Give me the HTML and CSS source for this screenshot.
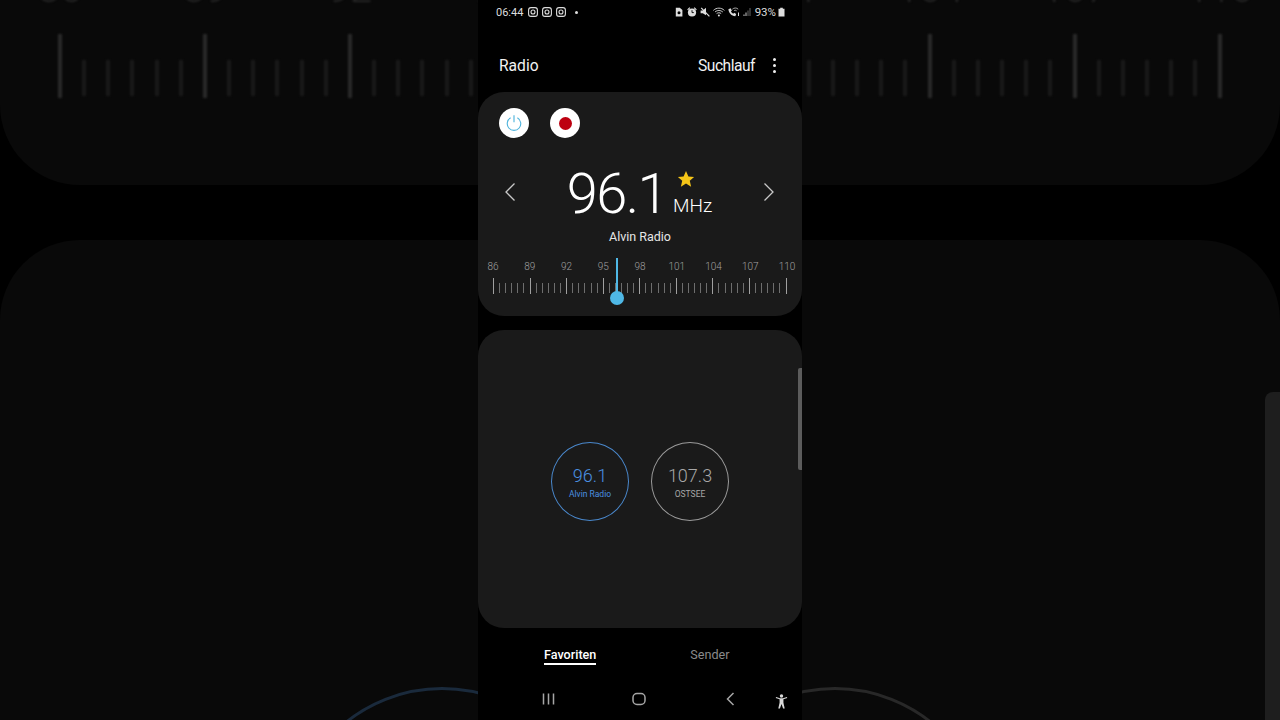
FILE: index.html
```html
<!DOCTYPE html>
<html lang="en">
<head>
    <meta charset="UTF-8">
    <meta name="viewport" content="width=device-width, initial-scale=1.0">
    <title>Radio</title>
    <link rel="stylesheet" href="styles.css">
</head>
<body>

    <!-- enlarged, dimmed copy of the screen behind the phone -->
    <div class="backdrop">
        <div class="bg-card bg-top">
            <div class="bg-labels">
                <span>86</span><span>89</span><span>92</span><span>95</span><span>98</span><span>101</span><span>104</span><span>107</span><span>110</span>
            </div>
            <div class="bg-ticks">
                <i class="big"></i><i></i><i></i><i></i><i></i><i></i>
                <i class="big"></i><i></i><i></i><i></i><i></i><i></i>
                <i class="big"></i><i></i><i></i><i></i><i></i><i></i>
                <i class="big"></i><i></i><i></i><i></i><i></i><i></i>
                <i class="big"></i><i></i><i></i><i></i><i></i><i></i>
                <i class="big"></i><i></i><i></i><i></i><i></i><i></i>
                <i class="big"></i><i></i><i></i><i></i><i></i><i></i>
                <i class="big"></i><i></i><i></i><i></i><i></i><i></i>
                <i class="big"></i>
            </div>
        </div>
        <div class="bg-card bg-bottom">
            <div class="bg-ring bg-ring-blue"></div>
            <div class="bg-ring bg-ring-grey"></div>
            <div class="bg-thumb"></div>
        </div>
    </div>

    <div class="phone">
        <div class="status-bar">
            <span class="time">06:44</span>
            <svg class="ig" viewBox="0 0 10 10"><rect x="0.6" y="0.6" width="8.8" height="8.8" rx="2.4"/><circle cx="5" cy="5" r="2"/></svg>
            <svg class="ig" viewBox="0 0 10 10"><rect x="0.6" y="0.6" width="8.8" height="8.8" rx="2.4"/><circle cx="5" cy="5" r="2"/></svg>
            <svg class="ig" viewBox="0 0 10 10"><rect x="0.6" y="0.6" width="8.8" height="8.8" rx="2.4"/><circle cx="5" cy="5" r="2"/></svg>
            <span class="dot"></span>
            <div class="status-right">
                <svg class="st" viewBox="0 0 10 10"><path class="fill" d="M1.8 0.8h4L8.4 3V9.6H1.8z"/><circle cx="5" cy="5.8" r="1.5" fill="#000"/></svg>
                <svg class="st" viewBox="0 0 10 10"><circle class="fill" cx="5" cy="5.5" r="4.1"/><path class="fill" d="M0.2 2.4L2.4 0.2 3.2 1 1 3.2zM9.8 2.4L7.6 0.2 6.8 1 9 3.2z"/><path d="M5 3.2V5.6H6.8" fill="none" stroke="#000" stroke-width="0.9"/></svg>
                <svg class="st" viewBox="0 0 10 10"><path class="fill" d="M0.6 3.4h2.2L6 0.8V8.2L2.8 6.2H0.6z"/><path d="M1.2 0.8L9.4 9.4" fill="none" stroke="#ddd" stroke-width="1.2"/></svg>
                <svg class="st wide" viewBox="0 0 12 10"><path d="M0.4 3.4C3.4 0.4 8.4 0.4 11.4 3.4M2 5C4.2 3 7.6 3 9.8 5M3.6 6.6C5 5.5 6.8 5.5 8.2 6.6" fill="none" stroke="#ccc" stroke-width="1"/><circle class="fill" cx="5.9" cy="8.4" r="1"/></svg>
                <svg class="st wide" viewBox="0 0 12 10"><path class="fill" d="M0.4 2.2L2.6 1.2 3.9 3.4 2.9 4.4C3.4 5.4 4.2 6.2 5.2 6.7L6.2 5.7 8.2 7 7.3 9.2C3.6 9 0.6 5.8 0.4 2.2z"/><path d="M4.4 2.2C6 0.6 8.6 0.6 10.2 2.2M6 3.8C6.8 3.1 7.8 3.1 8.6 3.8" fill="none" stroke="#bbb" stroke-width="0.9"/><path class="fill" d="M10 5.6h1V9h-1z"/></svg>
                <svg class="st signal" viewBox="0 0 8 10"><path d="M0.5 7.5h1v1.5h-1zM2.5 5.5h1v3.5h-1z" fill="#ccc"/><path d="M4.5 3.5h1v5.5h-1zM6.5 1h1v8h-1z" fill="#666"/></svg>
                <span class="pct">93%</span>
                <svg class="batt" viewBox="0 0 7 10"><path class="fill" d="M2.2 0.8h2.6v1H6.5V9.5H0.5V1.8h1.7z"/></svg>
            </div>
        </div>

        <div class="app-bar">
            <span class="app-title">Radio</span>
            <span class="scan">Suchlauf</span>
            <span class="more"><i></i><i></i><i></i></span>
        </div>

        <div class="card tuner">
            <div class="round-btns">
                <div class="round-btn">
                    <svg viewBox="0 0 16 16" width="18" height="18"><path d="M5 3.4A6 6 0 1 0 11 3.4M8 1.2V7.4" fill="none" stroke="#4fb4dc" stroke-width="1"/></svg>
                </div>
                <div class="round-btn"><span class="rec"></span></div>
            </div>

            <div class="freq-row">
                <svg class="arrow" viewBox="0 0 12 20"><path d="M10.5 1.5L2 10L10.5 18.5" /></svg>
                <div class="freq">
                    <span class="freq-num">96.1</span>
                    <div class="freq-side">
                        <svg class="star" viewBox="0 0 20 20"><path d="M10 1.2L12.7 7.2 19 7.8 14.2 12 15.7 18.6 10 15.1 4.3 18.6 5.8 12 1 7.8 7.3 7.2z"/></svg>
                        <span class="mhz">MHz</span>
                    </div>
                </div>
                <svg class="arrow" viewBox="0 0 12 20"><path d="M1.5 1.5L10 10L1.5 18.5" /></svg>
            </div>

            <div class="station">Alvin Radio</div>

            <div class="dial">
                <div class="dial-labels">
                    <span>86</span><span>89</span><span>92</span><span>95</span><span>98</span><span>101</span><span>104</span><span>107</span><span>110</span>
                </div>
                <div class="dial-ticks">
                    <i class="big"></i><i></i><i></i><i></i><i></i><i></i>
                    <i class="big"></i><i></i><i></i><i></i><i></i><i></i>
                    <i class="big"></i><i></i><i></i><i></i><i></i><i></i>
                    <i class="big"></i><i></i><i></i><i></i><i></i><i></i>
                    <i class="big"></i><i></i><i></i><i></i><i></i><i></i>
                    <i class="big"></i><i></i><i></i><i></i><i></i><i></i>
                    <i class="big"></i><i></i><i></i><i></i><i></i><i></i>
                    <i class="big"></i><i></i><i></i><i></i><i></i><i></i>
                    <i class="big"></i>
                </div>
                <div class="needle"></div>
                <div class="needle-knob"></div>
            </div>
        </div>

        <div class="card favourites">
            <div class="fav fav-active">
                <span class="fav-num">96.1</span>
                <span class="fav-name">Alvin Radio</span>
            </div>
            <div class="fav">
                <span class="fav-num">107.3</span>
                <span class="fav-name">OSTSEE</span>
            </div>
            <div class="scroll-thumb"></div>
        </div>

        <div class="tabs">
            <span class="tab tab-active">Favoriten</span>
            <span class="tab">Sender</span>
        </div>

        <div class="nav-bar">
            <svg class="nav-recent" viewBox="0 0 13 12"><path d="M1.5 0.5V11.5M6.5 0.5V11.5M11.5 0.5V11.5"/></svg>
            <svg class="nav-home" viewBox="0 0 14 14"><rect x="1" y="1.5" width="12" height="11" rx="4"/></svg>
            <svg class="nav-back" viewBox="0 0 9 14"><path d="M7.5 1L1.5 7L7.5 13"/></svg>
            <svg class="nav-a11y" viewBox="0 0 12 14"><circle cx="6" cy="1.8" r="1.6"/><path d="M0.6 3.8L4.2 5V8.2L3 13.6H4.5L6 9.4 7.5 13.6H9L7.8 8.2V5L11.4 3.8 11 2.8 7.4 3.9H4.6L1 2.8z"/></svg>
        </div>
    </div>

</body>
</html>
```

FILE: styles.css
```css
* {
    box-sizing: border-box;
}

body {
    margin: 0;
    height: 720px;
    overflow: hidden;
    position: relative;
    background: #000;
    font-family: Roboto, "Noto Sans", sans-serif;
    color: #fff;
}

/* blurred video background */
.backdrop {
    position: absolute;
    inset: 0;
    overflow: hidden;
}

.bg-card {
    background: #090909;
}

.bg-top {
    height: 185px;
    border-radius: 0 0 80px 80px;
    padding: 0 60px;
}

.bg-labels {
    height: 34px;
    margin: 0 -20px;
    display: flex;
    justify-content: space-between;
    color: #262626;
    font-size: 40px;
    line-height: 1;
    font-weight: 300;
}

.bg-labels span {
    width: 40px;
    display: flex;
    justify-content: center;
    margin-top: -31px;
    height: 40px;
    filter: blur(1px);
}

.bg-ticks {
    display: flex;
    justify-content: space-between;
    align-items: flex-start;
    margin-right: -2px;
    margin-left: -2px;
}

.bg-ticks i {
    width: 4px;
    height: 36px;
    margin-top: 26px;
    background: #191919;
    filter: blur(1px);
}

.bg-ticks i.big {
    height: 64px;
    margin-top: 0;
    background: #292929;
}

.bg-bottom {
    height: 480px;
    margin-top: 55px;
    border-radius: 80px 80px 0 0;
    position: relative;
}

.bg-ring {
    position: absolute;
    width: 310px;
    height: 310px;
    top: 447px;
    border-radius: 50%;
    border: 3px solid;
    filter: blur(0.6px);
}

.bg-ring-blue {
    left: 287px;
    border-color: #1a2a3c;
}

.bg-ring-grey {
    left: 680px;
    border-color: #282828;
}

.bg-thumb {
    position: absolute;
    right: 0;
    top: 152px;
    width: 15px;
    height: 400px;
    background: #1e1e1e;
    border-radius: 8px 0 0 0;
}

/* phone screen */
.phone {
    position: relative;
    width: 324px;
    height: 720px;
    margin-left: 478px;
    background: #000;
    display: flex;
    flex-direction: column;
}

.status-bar {
    height: 24px;
    display: flex;
    align-items: center;
    padding: 0 17px 0 18px;
    font-size: 11px;
    color: #ddd;
}

.time {
    width: 32px;
}

.ig {
    width: 10px;
    height: 10px;
    margin-right: 4px;
    flex-shrink: 0;
}

.ig rect, .ig circle {
    fill: none;
    stroke: #ddd;
    stroke-width: 1.1;
}

.dot {
    width: 3px;
    height: 3px;
    border-radius: 50%;
    background: #ddd;
    margin-left: 5px;
}

.status-right {
    margin-left: auto;
    display: flex;
    align-items: center;
    gap: 3px;
}

.fill {
    fill: #ddd;
}

.st {
    width: 10px;
    height: 10px;
}

.st.wide {
    width: 12px;
}

.st.signal {
    width: 8px;
    margin-right: 1px;
}

.pct {
    font-size: 11.5px;
    margin-right: -1px;
}

.batt {
    width: 7px;
    height: 10px;
}

.app-bar {
    height: 68px;
    display: flex;
    align-items: center;
    padding: 15px 26px 0 21px;
    font-size: 15.6px;
    color: #f2f2f2;
}

.app-title {
    margin-right: auto;
}

.scan {
    letter-spacing: -0.5px;
}

.more {
    display: flex;
    flex-direction: column;
    gap: 3px;
    margin-left: 18px;
}

.more i {
    width: 3px;
    height: 3px;
    border-radius: 50%;
    background: #eee;
}

.card {
    background: #1a1a1a;
    border-radius: 26px;
}

.tuner {
    height: 224px;
    padding-top: 16px;
}

.round-btns {
    display: flex;
    gap: 21px;
    padding-left: 21px;
}

.round-btn {
    width: 30px;
    height: 30px;
    border-radius: 50%;
    background: #fff;
    display: flex;
    align-items: center;
    justify-content: center;
}

.rec {
    width: 13px;
    height: 13px;
    border-radius: 50%;
    background: #bd0010;
}

.freq-row {
    height: 60px;
    margin-top: 26px;
    padding: 0 27px 0 26px;
    display: flex;
    align-items: center;
    justify-content: space-between;
}

.arrow {
    width: 12px;
    height: 20px;
    flex-shrink: 0;
    margin-bottom: 4px;
}

.arrow path {
    fill: none;
    stroke: #c8c8c8;
    stroke-width: 1.3;
}

.freq {
    display: flex;
    align-items: flex-end;
    gap: 6px;
}

.freq-num {
    font-size: 56px;
    line-height: 60px;
    font-weight: 300;
    letter-spacing: -1.6px;
}

.freq-side {
    display: flex;
    flex-direction: column;
    align-items: flex-start;
    padding-bottom: 7px;
}

.star {
    width: 18px;
    height: 18px;
    margin-left: 4px;
    fill: #f5c518;
}

.mhz {
    font-size: 19px;
    line-height: 23px;
    font-weight: 300;
    margin-top: 6px;
}

.station {
    text-align: center;
    font-size: 12.5px;
    line-height: 16px;
    margin-top: 5px;
    color: #e6e6e6;
}

.dial {
    position: relative;
    margin-top: 13px;
}

.dial-labels {
    display: flex;
    justify-content: space-between;
    padding: 3px 5px 0;
    font-size: 10px;
    line-height: 12px;
    font-weight: 300;
    color: #a0a0a0;
}

.dial-labels span {
    width: 20px;
    text-align: center;
}

.dial-ticks {
    display: flex;
    justify-content: space-between;
    align-items: flex-start;
    padding: 0 15px;
    margin-top: 5px;
}

.dial-ticks i {
    width: 1px;
    height: 10px;
    margin-top: 5px;
    background: #6e6e6e;
}

.dial-ticks i.big {
    height: 16px;
    margin-top: 0;
    background: #a0a0a0;
}

.needle {
    position: absolute;
    left: 138px;
    top: 0;
    width: 2px;
    height: 36px;
    background: #4fb8e6;
}

.needle-knob {
    position: absolute;
    left: 132px;
    top: 33px;
    width: 14px;
    height: 14px;
    border-radius: 50%;
    background: #4fb8e6;
}

.favourites {
    position: relative;
    height: 298px;
    margin-top: 14px;
    display: flex;
    align-items: center;
    justify-content: center;
    gap: 22px;
    padding-top: 5px;
}

.fav {
    width: 78px;
    height: 79px;
    border-radius: 50%;
    border: 1px solid #9a9a9a;
    display: flex;
    flex-direction: column;
    align-items: center;
    justify-content: center;
    padding-top: 2px;
    color: #a8a8a8;
}

.fav-active {
    border-color: #4a88cc;
    color: #4a90e0;
}

.fav-num {
    font-size: 18px;
    line-height: 22px;
    font-weight: 300;
}

.fav-name {
    font-size: 8.5px;
    line-height: 13px;
    margin-top: 1px;
}

.scroll-thumb {
    position: absolute;
    right: 0;
    top: 38px;
    width: 4px;
    height: 102px;
    background: #5c5c5c;
    border-radius: 2px 0 0 2px;
}

.tabs {
    height: 52px;
    display: flex;
    font-size: 12.6px;
    padding-left: 66px;
    padding-top: 18px;
    gap: 94px;
}

.tab {
    height: 19px;
    line-height: 18px;
    color: #8a8a8a;
}

.tab-active {
    color: #fff;
    font-weight: 500;
    border-bottom: 2px solid #fff;
}

.nav-bar {
    height: 40px;
    display: flex;
    align-items: center;
    padding: 0 0 2px 64px;
}

.nav-bar path, .nav-bar rect {
    fill: none;
    stroke: #a6a6a6;
    stroke-width: 1.5;
}

.nav-recent {
    width: 13px;
    height: 12px;
}

.nav-home {
    width: 14px;
    height: 14px;
    margin-left: 77px;
}

.nav-back {
    width: 9px;
    height: 14px;
    margin-left: 80px;
}

.nav-a11y {
    width: 13px;
    height: 15px;
    margin-left: 40px;
    margin-top: 5px;
}

.nav-bar .nav-a11y path {
    fill: #d8d8d8;
    stroke: none;
}

.nav-a11y circle {
    fill: #d8d8d8;
}
```
